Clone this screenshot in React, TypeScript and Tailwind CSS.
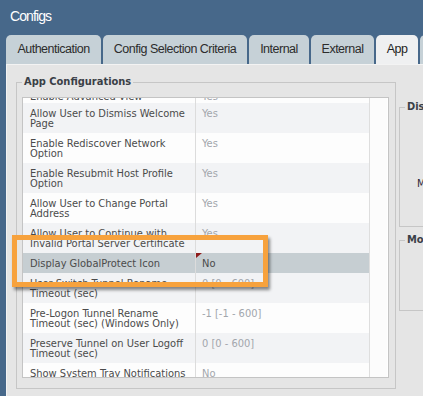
import React from 'react'

const tabs = [
  { label: 'Authentication', width: 'w-[95px]' },
  { label: 'Config Selection Criteria', width: 'w-[144px]' },
  { label: 'Internal', width: 'w-[60px]' },
  { label: 'External', width: 'w-[63px]' },
  { label: 'App', width: 'w-[42px]', active: true },
  { label: 'HIP', width: 'w-[40px]' },
]

const rows = [
  { label: 'Enable Advanced View', value: 'Yes', first: true },
  { label: 'Allow User to Dismiss Welcome\nPage', value: 'Yes' },
  { label: 'Enable Rediscover Network\nOption', value: 'Yes' },
  { label: 'Enable Resubmit Host Profile\nOption', value: 'Yes' },
  { label: 'Allow User to Change Portal\nAddress', value: 'Yes' },
  { label: 'Allow User to Continue with\nInvalid Portal Server Certificate', value: 'Yes' },
  { label: 'Display GlobalProtect Icon', value: 'No', selected: true },
  { label: 'User Switch Tunnel Rename\nTimeout (sec)', value: '0 [0 - 600]' },
  { label: 'Pre-Logon Tunnel Rename\nTimeout (sec) (Windows Only)', value: '-1 [-1 - 600]' },
  { label: 'Preserve Tunnel on User Logoff\nTimeout (sec)', value: '0 [0 - 600]' },
  { label: 'Show System Tray Notifications', value: 'No' },
]

function ConfigRow({ row, index }: { row: (typeof rows)[number]; index: number }) {
  const bg = row.selected ? 'bg-[#c6ced2]' : index % 2 === 0 ? 'bg-[#fdfdfd]' : 'bg-[#f2f3f5]'

  return (
    <div className={`flex ${bg}`}>
      <div
        className={`w-[173px] shrink-0 whitespace-pre-line border-r border-[#dcdcdc] pl-[7px] leading-[10px] text-[#4b4b4b] ${
          row.first ? 'pt-[9px] pb-[1px]' : 'pt-[6px] pb-[4px]'
        }`}
      >
        {row.label}
      </div>
      <div
        className={`relative flex-1 pl-[6px] leading-[10px] ${row.first ? 'pt-[9px]' : 'pt-[6px]'} ${
          row.selected ? 'text-[#4a4a4a]' : 'text-[#a2a6ac]'
        }`}
      >
        {row.selected && (
          <svg className="absolute left-0 top-0" width="6" height="5" viewBox="0 0 6 5">
            <polygon points="0,0 6,0 0,5" fill="#8e1b1b" />
          </svg>
        )}
        {row.value}
      </div>
    </div>
  )
}

export default function App() {
  return (
    <div className="relative flex h-[396px] w-[423px] flex-col overflow-hidden bg-[#47688a] font-['DejaVu_Sans_Condensed','DejaVu_Sans',sans-serif] text-[11px]">
      <div className="h-[35px] shrink-0 pl-[10px] pt-[8px] font-['Liberation_Sans',Arial,sans-serif] text-[14px] leading-[16px] tracking-[-0.9px] text-white">
        Configs
      </div>

      <div className="flex h-[29px] shrink-0 gap-[2px] pl-[6px] font-['Liberation_Sans',Arial,sans-serif] text-[12.5px] tracking-[-0.5px]">
        {tabs.map((tab) => (
          <div
            key={tab.label}
            className={`flex shrink-0 items-center justify-center whitespace-nowrap rounded-t-[5px] ${tab.width} ${
              tab.active ? 'bg-[#eff0f1] text-[#1e1e1e]' : 'bg-[#c6d1d7] text-[#2c2c2c]'
            }`}
          >
            {tab.label}
          </div>
        ))}
      </div>

      <div className="ml-[6px] flex flex-1 border-l border-t border-[#f3f3f3] bg-[#e5e5e5]">
        <fieldset className="ml-[9px] mt-[10px] h-[314px] w-[380px] shrink-0 border border-[#c6c6c6] px-[5px] pt-[8px]">
          <legend className="px-[2px] text-[11px] font-bold leading-[14px] text-[#3a3f47]">
            App Configurations
          </legend>
          <div className="flex h-[281px] w-[367px] border border-[#c4c4c4] bg-white">
            <div className="w-[346px] overflow-hidden">
              <div className="-mt-[15px]">
                {rows.map((row, i) => (
                  <ConfigRow key={row.label} row={row} index={i} />
                ))}
              </div>
            </div>
            <div className="w-[18px] border-l border-[#dedede] bg-[#fcfcfc]" />
          </div>
        </fieldset>

        <div className="ml-[3px] flex shrink-0 flex-col">
          <fieldset className="mt-[35px] h-[127px] w-[100px] border border-[#c6c6c6]">
            <legend className="ml-[5px] whitespace-nowrap px-[2px] text-[11px] font-bold leading-[14px] text-[#3a3f47]">
              Disable GlobalProtect App
            </legend>
            <div className="whitespace-nowrap pl-[17px] pt-[62px] text-[#2d2838]">Max Times User Can Disable</div>
          </fieldset>
          <fieldset className="mt-[6px] h-[78px] w-[100px] border border-[#c6c6c6]">
            <legend className="ml-[5px] whitespace-nowrap px-[2px] text-[11px] font-bold leading-[14px] text-[#3a3f47]">
              Mobile Security Manager
            </legend>
          </fieldset>
        </div>
      </div>

      <div className="absolute left-[12px] top-[235px] h-[52px] w-[256px] border-[5px] border-[#f7a23d] shadow-[2px_3px_3px_rgba(0,0,0,0.45)]" />
    </div>
  )
}
